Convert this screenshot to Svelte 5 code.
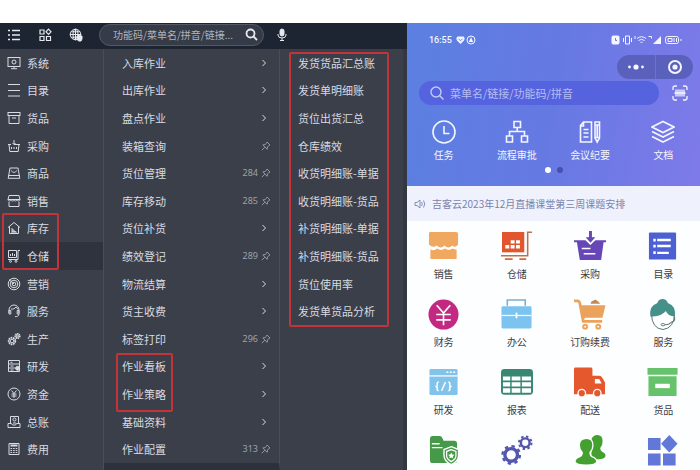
<script lang="ts">
  const sideMenu = [
    { name: '系统', icon: 'monitor' },
    { name: '目录', icon: 'lines' },
    { name: '货品', icon: 'box' },
    { name: '采购', icon: 'basket' },
    { name: '商品', icon: 'bag' },
    { name: '销售', icon: 'shop' },
    { name: '库存', icon: 'house' },
    { name: '仓储', icon: 'cart', active: true },
    { name: '营销', icon: 'target' },
    { name: '服务', icon: 'service' },
    { name: '生产', icon: 'gears' },
    { name: '研发', icon: 'server' },
    { name: '资金', icon: 'yen' },
    { name: '总账', icon: 'ledger' },
    { name: '费用', icon: 'calc' },
  ];

  // type: 'sub' opens another level, 'pin' is a page that can be pinned
  const subMenu = [
    { name: '入库作业', type: 'sub' },
    { name: '出库作业', type: 'sub' },
    { name: '盘点作业', type: 'sub' },
    { name: '装箱查询', type: 'pin' },
    { name: '货位管理', type: 'pin', code: '284' },
    { name: '库存移动', type: 'pin', code: '285' },
    { name: '货位补货', type: 'sub' },
    { name: '绩效登记', type: 'pin', code: '289' },
    { name: '物流结算', type: 'sub' },
    { name: '货主收费', type: 'sub' },
    { name: '标签打印', type: 'pin', code: '296' },
    { name: '作业看板', type: 'sub' },
    { name: '作业策略', type: 'sub' },
    { name: '基础资料', type: 'sub' },
    { name: '作业配置', type: 'pin', code: '313' },
  ];

  const reports = [
    '发货货品汇总账',
    '发货单明细账',
    '货位出货汇总',
    '仓库绩效',
    '收货明细账-单据',
    '收货明细账-货品',
    '补货明细账-单据',
    '补货明细账-货品',
    '货位使用率',
    '发货单货品分析',
  ];

  // 14x14, stroked with currentColor
  const menuIcons: Record<string, string> = {
    monitor: '<rect x="1" y="1.5" width="12" height="9"/><circle cx="7" cy="6" r="2"/><path d="M7 10.5v2M4 12.7h6"/>',
    lines: '<path d="M1 1.5h12M1 7.5h12M1 13h12"/>',
    box: '<rect x="1" y="1.5" width="12" height="3"/><path d="M2 4.500v8h10v-8M5 7h4"/>',
    basket: '<path d="M1 5.500h3M7 5.500h6M2 5.500l.8 7h8.400l.8-7M4.500 8v2M7 8v2M9.500 8v2M7 1v4M5.500 4l1.500 1.500L8.500 4"/>',
    bag: '<path d="M3 2h8l1.800 10.300H1.200zM1.500 9.500h11M4.500 4.500c.5 2.500 4.500 2.500 5 0"/>',
    shop: '<path d="M2 1.500h10l1 4H1zM1 5.500c0 2 3 2 3 0 0 2 3 2 3 0 0 2 3 2 3 0 0 2 3 2 3 0M2 8v4.500h10V8"/>',
    house: '<path d="M1 6.500l6-5 6 5M2.500 5.500v7h9v-7M5 12V7M7 12V9M9 12v-1.500M5 9h2M5 10.700h4"/>',
    cart: '<path d="M1.500 1.500h8v7h-8zM3.500 7V5M5.500 7V4M7.500 7V5M11 10.500V1.500h2M1 10.500h10"/><circle cx="3.500" cy="12.300" r="1"/><circle cx="9" cy="12.300" r="1"/>',
    target: '<circle cx="7" cy="7" r="5.800"/><circle cx="7" cy="7" r="3.800"/><circle cx="7" cy="7" r="1.800"/><path d="M7 7L2 2.500"/>',
    service: '<path d="M2 9V6a5 5 0 0 1 10 0v3M2 6.500h1.800v3.500H2zM10.200 6.500H12v3.500h-1.800zM12 10c0 2-2 2.700-4 2.700M4 5c2 .5 4-.5 5-2 .5 1 1 1.500 2 2"/>',
    gears: '<circle cx="5" cy="9" r="3.300" stroke-width="1.800" stroke-dasharray="1.700 .6"/><circle cx="5" cy="9" r="1.800"/><circle cx="10.500" cy="4" r="2.200" stroke-width="1.800" stroke-dasharray="1.300 .5"/><circle cx="10.500" cy="4" r="1"/>',
    server: '<path d="M1.500 1.500h11v11h-11zM1.500 5h11M1.500 9h8M3.500 3.300h2M3.500 7h3M3.500 11h3"/><circle cx="10.700" cy="9.300" r="2" fill="currentColor"/>',
    yen: '<circle cx="7" cy="7" r="6"/><path d="M4.500 3.500L7 6.500l2.500-3M7 6.500V11M4.500 7h5M4.500 9h5"/>',
    ledger: '<path d="M3.500 8.500v-7h8v7M1 8.500h3.500l1 1.500h3l1-1.500H13v4H1z"/><circle cx="7.500" cy="4.500" r="1.500"/><path d="M6 8h3"/>',
    calc: '<path d="M2 1.500h10v11H2z"/><path d="M3.500 3.500h7" stroke-width="2"/><path d="M3.500 6.500h7M3.500 8.500h7M3.500 10.500h7" stroke-dasharray="1.600 1"/>',
  };

  const shortcuts = [
    { name: '任务', icon: '<circle cx="12" cy="12" r="11"/><path d="M12 6v7.500h5.500"/>' },
    { name: '流程审批', icon: '<path d="M9 1.500h6.500v6H9zM1.500 16h6v6h-6zM16.500 16h6v6h-6zM12.200 7.500v4M4.500 16v-4.500h15V16"/>' },
    { name: '会议纪要', icon: '<path d="M2.500 5.500l3-3.500h8v20h-11zM5.500 2v4h-3M5.500 9.500h5M5.500 13h5M5.500 17h5M17 5h4.500v13L19.200 22 17 18zM17 5V2h4.500v3M17 17.500h4.500M19.200 5v12"/>' },
    { name: '文档', icon: '<path d="M12 1.500l11 5.500-11 5.500L1 7zM1 11.500L12 17l11-5.500M1 16.500L12 22l11-5.500"/>' },
  ];

  // 32x32, each in its own colour; the last row has no captions
  const apps = [
    { name: '销售', color: '#f0a75f', icon: '<path d="M2 1h27q2 0 2 2v11q-3 4-6 1-4 4-8 0-4 4-8 0-4 3-8-1V3q0-2 1-2z"/><path d="M2.500 19q4 2 7-1 4 3 8 0 4 3 8 0 2 1.500 4 1v9q0 1-1 1h-25q-1 0-1-1z"/>' },
    { name: '仓储', color: '#e2562f', icon: '<path d="M1 1h23v21H1z"/><path d="M10 9.500h4v3.500h-4zM15.500 9.500h4v3.500h-4zM4.500 14.500h4V18h-4zM10 14.500h4V18h-4zM15.500 14.500h4V18h-4z" fill="#fff"/><path d="M0 25.500h27.500V1.200H32" fill="none" stroke="#b9714f" stroke-width="1.600"/><path d="M4 29h8M19 29h7" stroke="#d7663f" stroke-width="1.800"/>' },
    { name: '采购', color: '#6746b8', icon: '<path d="M0 9.500h12l4.500 4.500L21 9.500h12v2h-2.500L28 30H6L3 11.500H0z"/><path d="M17 14.500l-6-6h3.500V0h5v8.500H23z" fill="#fff"/><path d="M15.500 0h3v6.500H22L17 12l-5-5.500h3.500z"/><path d="M8 18h9M10 23.500h12" stroke="#fff" stroke-width="1.700"/>' },
    { name: '目录', color: '#4c60d4', icon: '<rect x="2" y="1.500" width="28" height="28" rx="1"/><path d="M10.500 9.300h14M10.500 15.500h14M10.500 22.500h12" stroke="#fff" stroke-width="2.400"/><path d="M6.500 8h2.500v2.800H6.500zM6.500 14.200H9V17H6.500zM6.500 21H9v2.800H6.500z" fill="#fff"/>' },
    { name: '财务', color: '#c42981', icon: '<circle cx="16" cy="16" r="15.500"/><path d="M9 6.500l7 8 7-8M16 14.500V27M8.500 16h15M8.500 21.500h15" fill="none" stroke="#fff" stroke-width="1.700"/>' },
    { name: '办公', color: '#7cc4ef', icon: '<path d="M6.500 7V1h18.500v6" fill="none" stroke="#79aecd" stroke-width="1.600"/><rect x="0.5" y="7.500" width="31" height="23" rx="1.500"/><path d="M1 17h30" stroke="#fff" stroke-width="1.300"/><path d="M16 14v6" stroke="#fff" stroke-width="1.800"/>' },
    { name: '订购续费', color: '#eba25c', icon: '<path d="M6 6.500h26.500L29 20.500H10z"/><path d="M0 2h3.500q2 0 2.500 2.500l3.500 18.500H29" fill="none" stroke="#eba25c" stroke-width="2.800"/><path d="M17 5l1-2.500 4-2 3 2L27 5z" fill="#c08a58"/><path d="M11 20h19" stroke="#fff" stroke-width="1.300"/><circle cx="11.500" cy="28.500" r="3"/><circle cx="25" cy="28.500" r="3"/><circle cx="11.500" cy="28.500" r="1" fill="#fff"/><circle cx="25" cy="28.500" r="1" fill="#fff"/>' },
    { name: '服务', color: '#45918a', icon: '<path d="M4.500 15q.5 15.500 12 16.500Q28 30 28.500 15" fill="#fff" stroke="#59706f" stroke-width="1"/><path d="M3.500 18Q2 7 10.500 4.500 12 0 16 0t5.500 4Q30.500 7 28.500 18q-7 0-9-5.500Q14 19 3.500 18z"/><path d="M28 18q2 5-3 6-3 3-7 2.500" fill="none" stroke="#607a78" stroke-width="1.100"/><ellipse cx="16.500" cy="26.500" rx="2" ry="1.200" fill="#fff" stroke="#607a78"/>' },
    { name: '研发', color: '#82c3ec', icon: '<rect x="1.5" y="2" width="29" height="27" rx="1.500"/><path d="M1.500 9.200h29" stroke="#fff" stroke-width="1.300"/><path d="M19 5.500h2M22.500 5.500h2M26 5.500h2" stroke="#fff" stroke-width="1.600"/><path d="M11 15.500q-2 .5-1.500 2.500t-2 2q2.500 0 2 2t1.500 2.500M21 15.500q2 .5 1.500 2.500t2 2q-2.500 0-2 2t-1.500 2.500M18 15.500L14 24.500" fill="none" stroke="#fff" stroke-width="1.500"/>' },
    { name: '报表', color: '#388773', icon: '<rect x="0" y="2" width="33" height="26.500" rx="3.500"/><path d="M2 9.800h7.500v4.200H2zM11 9.800h9v4.200h-9zM21.500 9.800H31v4.200h-9.500zM2 15.800h7.500V20H2zM11 15.800h9V20h-9zM21.500 15.800H31V20h-9.500zM2 22h7.500v4.500H2zM11 22h9v4.500h-9zM21.500 22H31v4.500h-9.500z" fill="#fff"/>' },
    { name: '配送', color: '#e5572d', icon: '<path d="M1.500 0.500h16q1.500 0 1.500 1.500v7h7q2 0 3.500 2.500l2.500 4.500v12H0V2Q0 .5 1.500.5z"/><path d="M21.500 12.500h4.500l2.500 4.500h-7z" fill="#fff"/><circle cx="8" cy="27" r="4.500" fill="#fff"/><circle cx="24" cy="27" r="4.500" fill="#fff"/><circle cx="8" cy="27" r="3.200"/><circle cx="24" cy="27" r="3.200"/>' },
    { name: '货品', color: '#67c36b', icon: '<path d="M.5 1h31v7H.5zM1.500 9.500h29V30h-29z"/><path d="M8.500 17.300h15v4.500h-15z" fill="#fff"/>' },
    { name: '', color: '#47994a', icon: '<path d="M2 4q0-3 3-3h7q2 0 3 2.500l1 2.500h11q3 0 3 3v17q0 3-3 3H5q-3 0-3-3z"/><path d="M4 9h8M4 13h11" stroke="#fff" stroke-width="1.500"/><path d="M24 12l7.500 3v6q0 6.500-7.500 9.500-7.500-3-7.500-9.500v-6z" stroke="#fff" stroke-width="1.400"/><path d="M24 15l4.800 2v4.500q0 3.500-4.800 6-4.800-2.500-4.800-6V17z" fill="none" stroke="#fff" stroke-width="1.300"/><path d="M24 18l1 2 2.200.3-1.600 1.600.4 2.200-2-1-2 1 .4-2.200-1.600-1.600 2.200-.3z" fill="#fff"/>' },
    { name: '', color: '#5356ac', icon: '<circle cx="10.500" cy="20.500" r="6.500" fill="none" stroke="#5356ac" stroke-width="3.500"/><circle cx="10.500" cy="20.500" r="9" fill="none" stroke="#5356ac" stroke-width="2.400" stroke-dasharray="3.500 3.569"/><circle cx="25" cy="8" r="4.500" fill="none" stroke="#5356ac" stroke-width="2.500"/><circle cx="25" cy="8" r="6.500" fill="none" stroke="#5356ac" stroke-width="2" stroke-dasharray="2.500 2.605"/>' },
    { name: '', color: '#44a02f', icon: '<path d="M24 0q5.500 0 5.500 6.500 0 4.500-2.500 7 0 3 2 3.700 3.500 1.300 3.500 4.300 0 3-6 3.500H18V4q2-4 6-4z"/><path d="M13 3.500q6.500 0 6.500 7 0 4.500-3 7.500 0 3.500 2.500 4.500 4.500 1.500 4.500 5Q23 31 12.500 31T1 27.500q0-3.500 4.500-5Q8.500 21.500 8.500 18q-3-3-3-7.500 0-7 7.500-7z" stroke="#fff" stroke-width="1.300"/>' },
    { name: '', color: '#6278d8', icon: '<path d="M1 3h13v12.500H1zM1 19h13v12.500H1zM16.500 19h13v12.500h-13zM23 0l8.500 9L23 18l-8.500-9z"/>' },
  ];
</script>

<main class="page">
  <section class="desktop">
    <header class="topbar">
      <div class="tools">
        <button type="button" aria-label="菜单">
          <svg width="14" height="14" viewBox="0 0 14 14" fill="none" stroke="currentColor" stroke-width="1.500">
            <path d="M1 2.500h2M5 2.500h8M1 7h2M5 7h8M1 11.500h2M5 11.500h8" />
          </svg>
        </button>
        <button type="button" aria-label="应用">
          <svg width="14" height="14" viewBox="0 0 14 14" fill="none" stroke="currentColor" stroke-width="1.200">
            <path d="M2 2h4v4H2zM2 8.500h4v4H2zM8.500 8.500h4v4h-4zM10.500 1.200L13 3.800l-2.500 2.600L8 3.800z" />
          </svg>
        </button>
        <button type="button" aria-label="语言">
          <svg width="14" height="14" viewBox="0 0 14 14" fill="none" stroke="currentColor">
            <circle cx="6.500" cy="6.500" r="5.300" />
            <ellipse cx="6.500" cy="6.500" rx="2.500" ry="5.300" />
            <path d="M6.500 1v11M1 6.500h11M2 3.800h9M2 9.200h6" />
            <path d="M8 8h1V6.500h1.300V8H13v3l-1 2H9.500L8 11z" fill="currentColor" />
          </svg>
        </button>
      </div>
      <label class="search">
        <input type="text" aria-label="搜索" placeholder="功能码/菜单名/拼音/链接..." />
        <svg width="13" height="13" viewBox="0 0 13 13" fill="none" stroke="currentColor" stroke-width="1.800">
          <circle cx="5.500" cy="5.500" r="4" />
          <path d="M8.500 8.500l3.500 3.500" />
        </svg>
      </label>
      <button type="button" class="mic" aria-label="语音">
        <svg width="12" height="14" viewBox="0 0 12 14" fill="none" stroke="currentColor">
          <rect x="4" y="1" width="4" height="7" rx="2" fill="currentColor" />
          <path d="M2 6v1q0 3 4 3t4-3V6M6 10v2.500M4 12.500h4" />
        </svg>
      </button>
    </header>

    <div class="columns">
      <nav class="column side">
        <ul>
          {#each sideMenu as item}
            <li>
              <a href="#menu" class:active={item.active}>
                <svg width="14" height="14" viewBox="0 0 14 14" fill="none" stroke="currentColor">{@html menuIcons[item.icon]}</svg>
                {item.name}
              </a>
            </li>
          {/each}
        </ul>
        <div class="marks"><span class="mark"></span></div>
      </nav>

      <nav class="column sub">
        <ul>
          {#each subMenu as item}
            <li>
              <a href="#sub">
                <span class="name">{item.name}</span>
                {#if item.code}<span class="code">{item.code}</span>{/if}
                {#if item.type === 'sub'}
                  <svg width="14" height="10" viewBox="0 0 14 10" fill="none" stroke="currentColor"><path d="M5.500 2l3 3-3 3" /></svg>
                {:else}
                  <svg class="pin" width="10" height="10" viewBox="0 0 10 10" fill="none" stroke="currentColor" stroke-width=".9">
                    <path d="M6 1l3 3-1 .3L6.500 6l-.3 2.300L1.800 4 4 3.600 5.700 2zM3.800 6.200L.8 9.200" />
                  </svg>
                {/if}
              </a>
            </li>
          {/each}
        </ul>
        <div class="marks"><span class="mark"></span></div>
      </nav>

      <nav class="column reports">
        <ul>
          {#each reports as name}
            <li><a href="#report">{name}</a></li>
          {/each}
        </ul>
        <div class="marks"><span class="mark"></span></div>
      </nav>
    </div>
  </section>

  <section class="phone">
    <header class="hero">
      <div class="status">
        <span>16:55</span>
        <svg width="20" height="10" viewBox="0 0 20 10" fill="currentColor">
          <path d="M4.500 9L1 5.500Q-.3 3 1.500 1.500h6Q9.300 3 8 5.500z" />
          <path d="M2.500 3.800l2 2 2-2" fill="none" stroke="#6580e0" />
          <circle cx="15" cy="5" r="4" fill="none" stroke="currentColor" />
          <path d="M15 2l1 2.500 1.300 2.500h-4.600L14 4.500z" />
        </svg>
        <svg class="signals" width="71" height="10" viewBox="0 0 71 10" fill="none" stroke="currentColor">
          <rect x="1" y="1" width="7" height="8" rx="1" fill="currentColor" />
          <path d="M4.500 3v2.500h1.500" stroke="#6f7ee2" />
          <path d="M14.500 1h4v8h-4zM12.500 3v4M20.500 3v4" />
          <path d="M24 1v3M26 3.500q4.500-3.500 9 0M27.500 5.500q3-2.300 6 0M29.500 7.500q1-.8 2 0" />
          <path d="M37.500 1.500h3v2" />
          <path d="M42 9h8V1z" fill="currentColor" stroke="none" />
          <rect x="54.5" y="1.5" width="13" height="7" rx="2" />
          <path d="M57 3.500h4v3h-4zM63 3v4M65.500 3v4M70 4v2" />
        </svg>
      </div>

      <div class="capsule">
        <button type="button" aria-label="更多">
          <svg width="18" height="8" viewBox="0 0 18 8" fill="currentColor">
            <circle cx="2.500" cy="4" r="1.400" /><circle cx="9" cy="4" r="2.600" /><circle cx="15.500" cy="4" r="1.400" />
          </svg>
        </button>
        <button type="button" aria-label="关闭">
          <svg width="16" height="16" viewBox="0 0 16 16" fill="currentColor">
            <circle cx="8" cy="8" r="6" fill="none" stroke="currentColor" stroke-width="2" /><circle cx="8" cy="8" r="2.600" />
          </svg>
        </button>
      </div>

      <div class="finder">
        <label class="field">
          <svg width="14" height="14" viewBox="0 0 14 14" fill="none" stroke="currentColor" stroke-width="1.400">
            <circle cx="6" cy="6" r="5" /><path d="M9.500 9.500l4 4" />
          </svg>
          <input type="text" aria-label="查找" placeholder="菜单名/链接/功能码/拼音" />
        </label>
        <button type="button" aria-label="扫码">
          <svg width="16" height="16" viewBox="0 0 16 16" fill="none" stroke="currentColor" stroke-width="1.300">
            <path d="M1 5V3q0-2 2-2h2M11 1h2q2 0 2 2v2M15 11v2q0 2-2 2h-2M5 15H3q-2 0-2-2v-2" />
            <path d="M2.500 8h11M4 4.500v7M6 4.500v7M8 4.500v7M10 4.500v7M12 4.500v7" />
          </svg>
        </button>
      </div>

      <div class="shortcuts">
        {#each shortcuts as item}
          <a href="#shortcut">
            <svg width="24" height="24" viewBox="0 0 24 24" fill="none" stroke="currentColor" stroke-width="1.600">{@html item.icon}</svg>
            {item.name}
          </a>
        {/each}
      </div>
      <div class="dots"><i class="on"></i><i></i></div>
    </header>

    <p class="notice">
      <svg width="12" height="12" viewBox="0 0 12 12" fill="none" stroke="currentColor" stroke-width=".9">
        <path d="M1 4.500h2L6 2v8L3 7.500H1zM7.500 4q1.500 2 0 4M9.500 2.500q2.500 3.500 0 7" />
      </svg>
      吉客云2023年12月直播课堂第三周课题安排
    </p>

    <div class="apps">
      {#each apps as app}
        <a href="#app">
          <svg width="32" height="32" viewBox="0 0 33 33" fill={app.color}>{@html app.icon}</svg>
          {app.name}
        </a>
      {/each}
    </div>
  </section>
</main>

<style>
  :global(body) {
    background: #fff;
  }

  .page {
    box-sizing: border-box;
    display: grid;
    grid-template-columns: 407fr 293fr;
    grid-template-rows: minmax(0, 1fr);
    height: 100vh;
    padding-top: 23px;
    overflow: hidden;
    font-family: "Noto Sans CJK SC", "Noto Sans", sans-serif;
    font-size: 11px;
    line-height: 16px;
  }

  .page :is(a, button, input) {
    font: inherit;
    color: inherit;
    text-decoration: none;
  }

  button {
    display: grid;
    place-items: center;
    padding: 0;
    border: 0;
    background: none;
  }

  svg {
    flex: none;
    display: block;
  }

  ul {
    margin: 0;
    padding: 0;
    list-style: none;
  }

  input {
    flex: 1;
    min-width: 0;
    padding: 0;
    border: 0;
    outline: 0;
    background: none;
  }

  .desktop {
    display: flex;
    flex-direction: column;
    min-height: 0;
    color: #d8dbe1;
    background: #3b3f4a;
  }

  .topbar {
    display: flex;
    align-items: center;
    box-sizing: border-box;
    height: 26px;
    padding: 0 0 3px 7px;
    color: #e6e9ee;
    background: #1d2432;
  }

  .tools {
    display: flex;
    gap: 17px;
    width: 92px;
  }

  .search {
    box-sizing: border-box;
    display: flex;
    align-items: center;
    width: 165px;
    height: 22px;
    padding: 0 5px 0 13px;
    border: 1px solid #535966;
    border-radius: 11px;
    background: #363b48;
    font-size: 10px;
  }

  .search input::placeholder {
    color: #b0b4bd;
    opacity: 1;
  }

  .mic {
    margin-left: 12px;
  }

  .columns {
    flex: 1;
    display: grid;
    grid-template-columns: 104px 176px 1fr;
    min-height: 0;
  }

  .column {
    display: grid;
    padding-bottom: 7px;
    border-right: 1px solid #474e59;
  }

  .column ul,
  .marks {
    grid-area: 1 / 1;
    display: grid;
    grid-template-rows: repeat(15, 1fr);
    min-height: 0;
  }

  .column li {
    display: grid;
    min-height: 0;
  }

  .column a {
    display: flex;
    align-items: center;
  }

  .marks {
    pointer-events: none;
  }

  .mark {
    border: 2px solid #c2343a;
    border-radius: 2px;
  }

  .side a {
    gap: 6px;
    padding-left: 7px;
  }

  .side .active {
    background: #2f333e;
  }

  .side .mark {
    grid-row: 7 / 9;
    margin: -2px 44px 0 2px;
  }

  .sub {
    border-bottom: 7px solid #2d313c;
    padding-bottom: 0;
  }

  .sub a {
    padding: 0 8px 0 18px;
  }

  .sub .name {
    flex: 1;
  }

  .sub .code {
    margin-right: 3px;
    color: #9da1aa;
    font-family: "Noto Sans", sans-serif;
    font-size: 9px;
  }

  .sub .pin {
    color: #9da1aa;
  }

  .sub .mark {
    grid-row: 12 / 14;
    margin: 0 106px -4px 12px;
  }

  .reports {
    border-right: 4px solid #333741;
  }

  .reports a {
    padding-left: 18px;
  }

  .reports .mark {
    grid-row: 1 / 11;
    margin: 3px 14px -2px 9px;
  }

  .phone {
    min-width: 0;
    color: #3c3d42;
    font-size: 10px;
    background: #fdfeff;
  }

  .hero {
    display: flex;
    flex-direction: column;
    height: 163px;
    color: #f3f6ff;
    background: linear-gradient(100deg, #5b80e1, #6679e3 50%, #7e7ae9);
  }

  .status {
    display: flex;
    align-items: center;
    gap: 4px;
    height: 32px;
    padding: 2px 18px 0 22px;
    box-sizing: border-box;
    font-family: Roboto, sans-serif;
    font-size: 9px;
    font-weight: 500;
  }

  .signals {
    margin-left: auto;
  }

  .capsule {
    align-self: flex-end;
    display: grid;
    grid-template-columns: 1fr 1fr;
    width: 76px;
    height: 24px;
    margin-right: 7px;
    border-radius: 12px;
    background: #5a61bd;
  }

  .capsule button + button {
    border-left: 1px solid #6c72c9;
  }

  .finder {
    display: flex;
    gap: 13px;
    padding: 2px 12px 0;
  }

  .field {
    flex: 1;
    display: flex;
    align-items: center;
    gap: 6px;
    height: 24px;
    padding-left: 11px;
    border-radius: 12px;
    color: #c3cbf8;
    background: #5663de;
    font-size: 11px;
  }

  .field input::placeholder {
    color: #b5bdf4;
    opacity: 1;
  }

  .shortcuts {
    display: grid;
    grid-template-columns: repeat(4, 1fr);
    padding-top: 15px;
  }

  .shortcuts a,
  .apps a {
    display: flex;
    flex-direction: column;
    align-items: center;
    gap: 3px;
  }

  .dots {
    display: flex;
    justify-content: center;
    gap: 6px;
    padding: 4px 0 0 1px;
  }

  .dots i {
    width: 6px;
    height: 6px;
    border-radius: 50%;
    background: #4650ae;
  }

  .dots .on {
    background: #fff;
  }

  .notice {
    display: flex;
    align-items: center;
    gap: 6px;
    height: 35px;
    margin: 0;
    padding-left: 7px;
    color: #7883b0;
    background: #eff2fc;
    white-space: nowrap;
  }

  .apps {
    display: grid;
    grid-template-columns: repeat(4, 1fr);
    grid-auto-rows: 68px;
    padding-top: 10px;
  }
</style>
